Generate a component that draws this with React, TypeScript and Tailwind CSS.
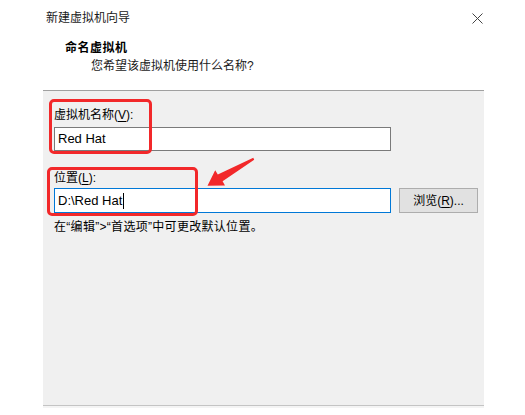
import React from 'react';

const font = "font-['Liberation_Sans','Noto_Sans_CJK_SC',sans-serif]";

// 助记符下划线
const Key = ({ k }: { k: string }) => <span className="underline underline-offset-2">{k}</span>;

export default function App() {
  return (
    <div className={`relative w-[525px] h-[415px] bg-white text-[12px] leading-[16px] text-black ${font}`}>
      <div className="ml-[43px] w-[441px]">
        {/* 向导标题区 */}
        <div className="h-[91px] border-b border-[#a0a0a0]">
          <div className="flex items-center justify-between pt-[10px] pl-[3px] pr-[1px]">
            <span className="text-[#1a1a1a]">新建虚拟机向导</span>
            <svg width="11" height="11" viewBox="0 0 11 11">
              <path d="M0.5 0.5 L10.5 10.5 M10.5 0.5 L0.5 10.5" stroke="#444" strokeWidth="1" />
            </svg>
          </div>
          <div className="mt-[14px] pl-[22px] font-bold tracking-[0.5px]">命名虚拟机</div>
          <div className="mt-[2px] pl-[48px] text-[#1a1a1a]">您希望该虚拟机使用什么名称?</div>
        </div>

        {/* 内容面板 */}
        <div className="h-[314px] bg-[#f0f0f0] pl-[11px] pt-[16px]">
          <div>
            虚拟机名称(<Key k="V" />):
          </div>
          <div className="mt-[4px] w-[337px] h-[24px] bg-white border border-[#7a7a7a] flex items-center pl-[3px] text-[13px]">
            Red Hat
          </div>

          <div className="mt-[19px]">
            位置(<Key k="L" />):
          </div>
          <div className="mt-[2px] flex gap-[8px]">
            <div className="w-[337px] h-[25px] bg-white border border-[#0078d7] flex items-center pl-[3px] text-[13px]">
              D:\Red Hat<span className="ml-[1px] w-px h-[16px] bg-black" />
            </div>
            <button className="w-[79px] h-[25px] bg-[#e1e1e1] border border-[#adadad] text-center">
              浏览(<Key k="R" />)...
            </button>
          </div>

          <div className="mt-[6px] tracking-[0.3px]">在“编辑”&gt;“首选项”中可更改默认位置。</div>
        </div>
        <div className="h-[1px] bg-[#c4c4c4]" />
        <div className="h-[2px] bg-[#f4f4f4]" />
      </div>

      {/* 标注：红框与箭头 */}
      <div className="absolute left-[49px] top-[99px] w-[103px] h-[55px] border-[3px] border-[#f2282a] rounded-[5px]" />
      <div className="absolute left-[47px] top-[167px] w-[151px] h-[49px] border-[3px] border-[#f2282a] rounded-[5px]" />
      <svg className="absolute left-0 top-0" width="525" height="415" viewBox="0 0 525 415">
        <polygon
          points="253.3,157.8 254.2,159.8 222.6,181.2 225,185.6 207.5,185.8 215.2,170.2 217.8,174.6"
          fill="#f2282a"
        />
      </svg>
    </div>
  );
}
